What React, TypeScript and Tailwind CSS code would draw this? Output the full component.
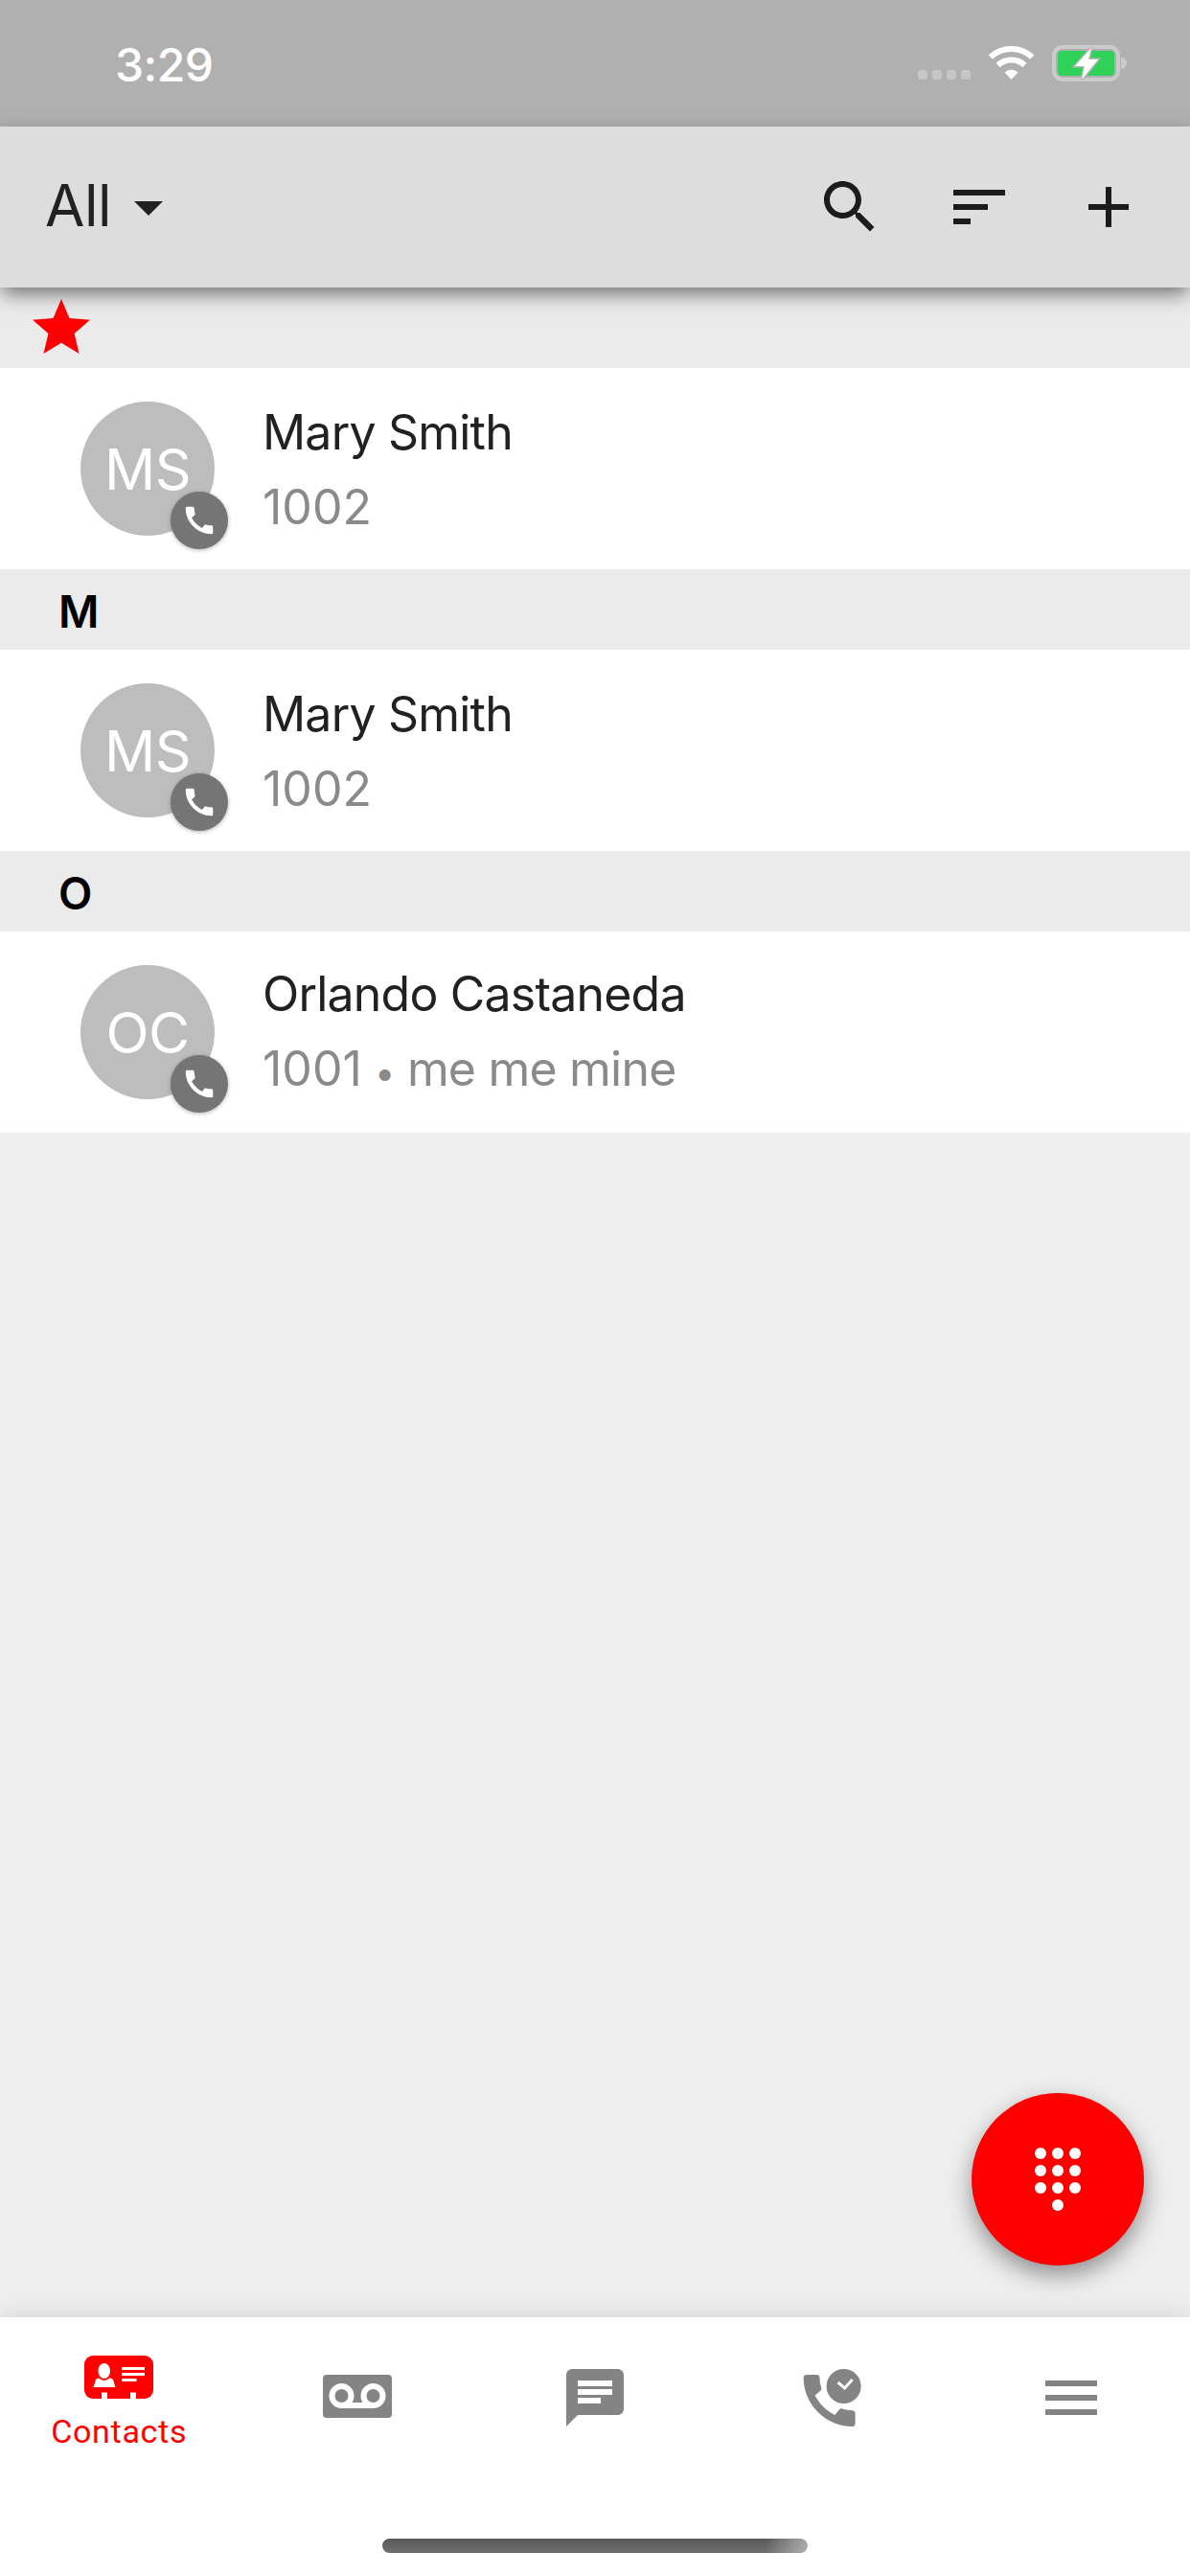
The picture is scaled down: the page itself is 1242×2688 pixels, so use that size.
const SANS = "font-['Inter','Liberation_Sans',sans-serif]";

const PHONE =
  "M20.01 15.38c-1.23 0-2.42-.2-3.53-.56-.35-.12-.74-.03-1.01.24l-1.57 1.97c-2.83-1.35-5.48-3.9-6.89-6.83l1.95-1.66c.27-.28.35-.67.24-1.02-.37-1.11-.56-2.3-.56-3.53 0-.54-.45-.99-.99-.99H4.19C3.65 3 3 3.24 3 3.99 3 13.28 10.73 21 20.01 21c.71 0 .99-.63.99-1.18v-3.45c0-.54-.45-.99-.99-.99z";

function StatusBar() {
  return (
    <div className="flex h-[132px] shrink-0 items-center justify-between bg-[#b0b0b0] pl-[120px] pr-[65px] pt-[4px]">
      <span className={`${SANS} text-[48px] font-medium leading-none tracking-[-0.5px] text-white`}>3:29</span>
      <div className="flex items-end gap-[19px] pb-[4px]">
        <div className="mb-[2px] flex gap-[5px]">
          {[0, 1, 2, 3].map((i) => (
            <span key={i} className="h-[10px] w-[10px] rounded-[3px] bg-[#c6c6c6]" />
          ))}
        </div>
        <svg className="mb-[2px]" width="47" height="35" viewBox="0 0 47 35">
          <path d="M1.7 11.6A32 32 0 0 1 45.3 11.6" fill="none" stroke="#fff" strokeWidth="6" />
          <path d="M9.5 20A20.5 20.5 0 0 1 37.5 20" fill="none" stroke="#fff" strokeWidth="6" />
          <path d="M23.5 35L16.5 27.5A10.2 10.2 0 0 1 30.5 27.5Z" fill="#fff" />
        </svg>
        <svg width="79" height="38" viewBox="0 0 79 38">
          <rect x="2" y="2" width="67" height="34" rx="9" fill="none" stroke="#cbcbcb" strokeWidth="4" />
          <rect x="6" y="6" width="59" height="26" rx="4" fill="#30d158" />
          <path d="M72 13a6 6 0 0 1 0 12z" fill="#cbcbcb" />
          <path
            d="M41 3L24 22H34L31 36L48 15H38Z"
            fill="#fff"
            stroke="#b8b8b8"
            strokeWidth="3"
            paintOrder="stroke"
          />
        </svg>
      </div>
    </div>
  );
}

function Icon({ d }: { d: string }) {
  return (
    <svg width="72" height="72" viewBox="0 0 24 24" fill="#1c1c1c">
      <path d={d} />
    </svg>
  );
}

function Header() {
  return (
    <div className="relative z-10 flex h-[168px] shrink-0 items-center justify-between bg-[#dddddd] pl-[47px] pr-[49px] shadow-[0_8px_20px_-2px_rgba(0,0,0,0.55)]">
      <div className="flex items-center gap-[24px]">
        <span className={`${SANS} pb-[4px] text-[60px] leading-none tracking-[-0.5px] text-[#212121]`}>All</span>
        <svg width="30" height="15" viewBox="0 0 30 15" className="mt-[2px]">
          <path d="M0 0H30L15 15Z" fill="#212121" />
        </svg>
      </div>
      <div className="flex items-center gap-[63px]">
        <Icon d="M15.5 14h-.79l-.28-.27C15.41 12.59 16 11.11 16 9.5 16 5.91 13.09 3 9.5 3S3 5.91 3 9.5 5.91 16 9.5 16c1.61 0 3.09-.59 4.23-1.57l.27.28v.79l5 4.99L20.49 19l-4.99-5zm-6 0C7.01 14 5 11.99 5 9.5S7.01 5 9.5 5 14 7.01 14 9.5 11.99 14 9.5 14z" />
        <Icon d="M3 18h6v-2H3v2zM3 6v2h18V6H3zm0 7h12v-2H3v2z" />
        <Icon d="M19 13h-6v6h-2v-6H5v-2h6V5h2v6h6v2z" />
      </div>
    </div>
  );
}

function Section({ letter }: { letter?: string }) {
  return (
    <div className="flex h-[84px] items-center bg-[#ebebeb]">
      {letter ? (
        <span className={`${SANS} pl-[61px] pt-[3px] text-[46px] font-semibold leading-none text-black`}>{letter}</span>
      ) : (
        <svg className="ml-[28px]" width="72" height="72" viewBox="0 0 24 24" fill="#ff0000">
          <path d="M12 17.27L18.18 21l-1.64-7.03L22 9.24l-7.19-.61L12 2 9.19 8.63 2 9.24l5.46 4.73L5.82 21z" />
        </svg>
      )}
    </div>
  );
}

function Row({ initials, name, sub, note }: { initials: string; name: string; sub: string; note?: string }) {
  return (
    <div className="flex h-[210px] items-center gap-[50px] bg-white pl-[84px]">
      <div className="relative flex h-[140px] w-[140px] shrink-0 items-center justify-center rounded-full bg-[#bdbdbd]">
        <span className={`${SANS} text-[59px] leading-none tracking-[-0.5px] text-white`}>{initials}</span>
        <div className="absolute left-[94px] top-[94px] flex h-[60px] w-[60px] items-center justify-center rounded-full bg-[#757575] shadow-[0_1px_4px_rgba(0,0,0,0.3)]">
          <svg width="38" height="38" viewBox="0 0 24 24" fill="#fff">
            <path d={PHONE} />
          </svg>
        </div>
      </div>
      <div className={`${SANS} flex flex-col pt-[1px] tracking-[-0.8px]`}>
        <span className="text-[50px] leading-[78px] text-[#212121]">{name}</span>
        <span className="text-[50px] leading-[78px] text-[#8a8a8a]">
          <span className="tracking-normal">{sub}</span>
          {note ? (
            <>
              {" "}
              <span className="text-[38px]">•</span> {note}
            </>
          ) : null}
        </span>
      </div>
    </div>
  );
}

function Tab({ children, top }: { children: React.ReactNode; top?: boolean }) {
  return (
    <div className={`flex flex-1 flex-col items-center ${top ? "pt-[40px]" : "pt-[48px]"}`}>{children}</div>
  );
}

function TabBar() {
  const g = "#848484";
  return (
    <div className="relative z-10 flex h-[270px] shrink-0 flex-col bg-white shadow-[0_0_24px_rgba(0,0,0,0.12)]">
      <div className="flex">
        <Tab top>
          <svg width="72" height="45" viewBox="0 0 72 45">
            <rect width="72" height="45" rx="9" fill="#ff0000" />
            <rect x="18" y="38.5" width="6" height="6.5" fill="#fff" />
            <rect x="48" y="38.5" width="6" height="6.5" fill="#fff" />
            <path d="M9.5 33L12 25C14 23.5 16 22.5 20.7 22C25.5 22.5 28 23.5 30 25L32.5 33Z" fill="#fff" />
            <ellipse cx="20.7" cy="16" rx="8.5" ry="10" fill="#ff0000" />
            <ellipse cx="20.7" cy="16" rx="6.3" ry="8" fill="#fff" />
            <rect x="39" y="12" width="24" height="3" fill="#fff" />
            <rect x="39" y="18" width="24" height="3" fill="#fff" />
            <rect x="39" y="24" width="15.5" height="3" fill="#fff" />
          </svg>
          <span className="mt-[16px] font-['Roboto',sans-serif] text-[34px] leading-[36px] tracking-[0.7px] text-[#ff0000]">Contacts</span>
        </Tab>
        <Tab>
          <svg width="72" height="72" viewBox="0 0 72 72">
            <rect x="0" y="12" width="72" height="45" rx="4" fill={g} />
            <circle cx="19.5" cy="34" r="10" fill="none" stroke="#fff" strokeWidth="6" />
            <circle cx="52.5" cy="34" r="10" fill="none" stroke="#fff" strokeWidth="6" />
            <rect x="19.5" y="41" width="33" height="6" fill="#fff" />
          </svg>
        </Tab>
        <Tab>
          <svg width="72" height="72" viewBox="0 0 72 72">
            <path d="M12 6h48a6 6 0 0 1 6 6v36a6 6 0 0 1-6 6H18L6 66V12a6 6 0 0 1 6-6z" fill={g} />
            <rect x="18" y="18" width="36" height="6" fill="#fff" />
            <rect x="18" y="27" width="36" height="6" fill="#fff" />
            <rect x="18" y="36" width="24" height="6" fill="#fff" />
          </svg>
        </Tab>
        <Tab>
          <svg width="72" height="72" viewBox="0 0 72 72">
            <g transform="translate(-3.4 3) scale(3)">
              <path d={PHONE} fill={g} />
            </g>
            <circle cx="47.6" cy="24" r="18" fill={g} />
            <path d="M41.6 20L48.6 26L56.6 17" fill="none" stroke="#fff" strokeWidth="3" />
          </svg>
        </Tab>
        <Tab>
          <svg width="72" height="72" viewBox="0 0 72 72">
            <rect x="9" y="18" width="54" height="6" fill={g} />
            <rect x="9" y="33" width="54" height="6" fill={g} />
            <rect x="9" y="48" width="54" height="6" fill={g} />
          </svg>
        </Tab>
      </div>
      <div className="mx-auto mb-[24px] mt-auto h-[15px] w-[444px] rounded-full bg-[linear-gradient(to_right,transparent_90%,rgba(190,190,190,0.8)_100%),linear-gradient(#585858,#707070)]" />
    </div>
  );
}

function Fab() {
  return (
    <div className="absolute left-[1014px] top-[2184px] z-20 flex h-[180px] w-[180px] items-center justify-center rounded-full bg-[#ff0000] shadow-[0_10px_24px_rgba(0,0,0,0.4)]">
      <div className="grid grid-cols-3 gap-[6px]">
        {Array.from({ length: 9 }).map((_, i) => (
          <span key={i} className="h-[12px] w-[12px] rounded-full bg-white" />
        ))}
        <span className="col-start-2 h-[12px] w-[12px] rounded-full bg-white" />
      </div>
    </div>
  );
}

export default function App() {
  return (
    <div className="relative flex h-[2688px] w-[1242px] flex-col overflow-hidden bg-[#eeeeee]">
      <StatusBar />
      <Header />
      <div className="flex-1">
        <Section />
        <Row initials="MS" name="Mary Smith" sub="1002" />
        <Section letter="M" />
        <Row initials="MS" name="Mary Smith" sub="1002" />
        <Section letter="O" />
        <Row initials="OC" name="Orlando Castaneda" sub="1001" note="me me mine" />
      </div>
      <TabBar />
      <Fab />
    </div>
  );
}
